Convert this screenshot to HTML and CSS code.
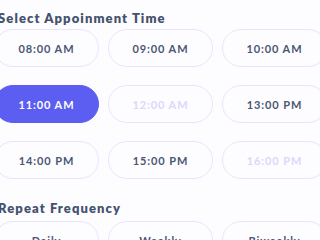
FILE: index.html
```html
<!DOCTYPE html>
<html>
<head>
<meta charset="utf-8">
<link rel="stylesheet" href="styles.css">
</head>
<body>
<div class="page">
  <h2 class="title">Select Appoinment Time</h2>
  <div class="grid">
    <div class="slot">08:00 AM</div>
    <div class="slot">09:00 AM</div>
    <div class="slot">10:00 AM</div>
    <div class="slot active">11:00 AM</div>
    <div class="slot disabled">12:00 AM</div>
    <div class="slot">13:00 PM</div>
    <div class="slot">14:00 PM</div>
    <div class="slot">15:00 PM</div>
    <div class="slot disabled">16:00 PM</div>
  </div>
  <h2 class="title second">Repeat Frequency</h2>
  <div class="grid">
    <div class="slot">Daily</div>
    <div class="slot">Weekly</div>
    <div class="slot">Biweekly</div>
  </div>
</div>
</body>
</html>
```
FILE: styles.css
```css
html, body {
  margin: 0;
  padding: 0;
  background: #fdfcff;
  overflow: hidden;
}
.page {
  margin-left: -6px;
  width: 333px;
  padding-top: 10px;
  font-family: Lato, "Liberation Sans", sans-serif;
}
.title {
  margin: 0 0 3px 4px;
  font-size: 13px;
  line-height: 16px;
  font-weight: 800;
  letter-spacing: 1.1px;
  color: #45526e;
  white-space: nowrap;
}
.title.second {
  margin-top: 21px;
  margin-bottom: 5px;
}
.grid {
  display: grid;
  grid-template-columns: repeat(3, 105px);
  column-gap: 9px;
  row-gap: 18px;
}
.slot {
  box-sizing: border-box;
  height: 38px;
  border: 1.5px solid #e9e5fd;
  border-radius: 19px;
  display: flex;
  align-items: center;
  justify-content: center;
  font-size: 11px;
  font-weight: 700;
  letter-spacing: 0.9px;
  color: #4a5773;
  background: #fdfcff;
}
.slot.active {
  background: #5b5ef0;
  border-color: #5b5ef0;
  color: #ffffff;
}
.slot.disabled {
  color: #dcd7fb;
}
```
